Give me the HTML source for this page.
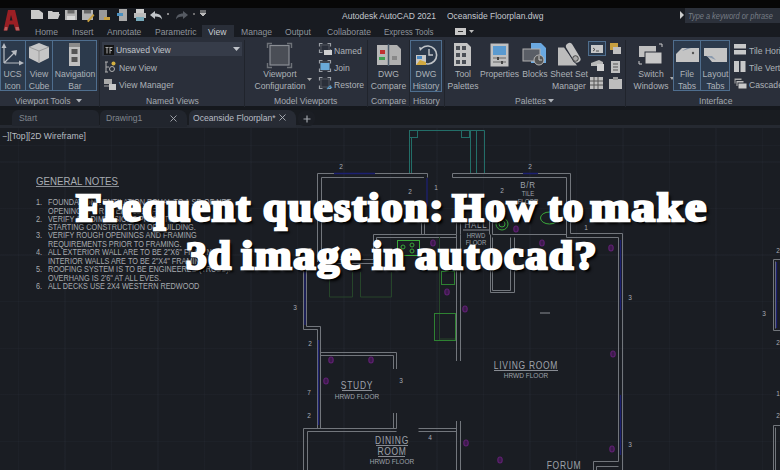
<!DOCTYPE html>
<html><head><meta charset="utf-8">
<style>
*{margin:0;padding:0;box-sizing:border-box}
html,body{width:780px;height:470px;overflow:hidden;background:#1a1d23}
body{position:relative;font-family:"Liberation Sans",sans-serif}
.a{position:absolute;white-space:nowrap}
svg.a{overflow:visible}
#top{left:0;top:0;width:780px;height:8px;background:#070707}
#tbar{left:0;top:8px;width:780px;height:29px;background:#181b21}
#ribbon{left:0;top:37px;width:780px;height:69px;background:#2a2f3a}
#lbl{left:0;top:106px;width:780px;height:4px;background:#15181d}
#ftabs{left:0;top:110px;width:780px;height:17px;background:#191c21}
#draw{left:0;top:127px;width:780px;height:343px;background:#1a1d23}
.tab{top:27px;font-size:8.6px;color:#8e949c;line-height:11px}
.rt{font-size:8.6px;color:#adb2b8;line-height:11px}
.ct{text-align:center}
.pl{top:96px;font-size:8.6px;color:#a4a9b0;line-height:11px}
.notes{font-size:7.3px;line-height:7.55px;color:#a8abb0;transform:scaleY(1.12);transform-origin:0 0}
.sep{top:40px;width:1px;height:67px;background:#20242c}
.title{color:#fff;font-family:"Liberation Serif",serif;font-weight:bold;font-size:44.0px;letter-spacing:1.5px;line-height:normal;-webkit-text-stroke:2.8px #fff;text-shadow:2px 2px 1px #000,3px 3px 3px #000;transform-origin:0 0}
</style></head><body>
<div class="a" id="top"></div>
<div class="a" id="tbar"></div>
<div class="a" id="ribbon"></div>
<div class="a" id="lbl"></div>
<div class="a" id="ftabs"></div>
<div class="a" id="draw"></div>
<div class="a" style="left:0;top:125px;width:780px;height:3px;background:#252931"></div>

<!-- logo -->
<svg class="a" style="left:0;top:0" width="24" height="34"><path d="M3.5 30.5L8 10L15 10L19.8 30.5L15.5 30.5L13.8 24.5L9.2 24.5L7.5 30.5Z M9.8 20.5L11 15L12.5 20.5Z" fill="#9a1f24" fill-rule="evenodd"/><path d="M4 30.5L5 27L7.5 27L7.2 30.5Z M16 30.5L15.3 27L18.8 27L19.5 30.5Z" fill="#c87a78" opacity="0.7"/></svg>
<!-- QAT -->
<svg class="a" style="left:0;top:0" width="220" height="24">
 <g fill="#c9c9c9">
  <path d="M31 10h8l4 3v6h-12z"/>
  <path d="M48 11h4l1 1h6v2h-9l-2 5z M50 14h10l-2 5h-10z"/>
  <path d="M65 10h12v10h-12z" fill="#b4b4b4"/><rect x="67.5" y="10" width="7" height="3.5" fill="#6a6a6a"/><rect x="67" y="16" width="8" height="4" fill="#d8d8d8"/>
  <path d="M82 10h11v10h-11z" fill="#b4b4b4"/><rect x="84" y="10" width="7" height="3.5" fill="#6a6a6a"/><path d="M87 21l6-7 1.5 1.2-6 7z" fill="#c8a040"/>
  <path d="M99 10h8v10h-8z" fill="#999"/><path d="M104 17h6v3h-6z" fill="#c8a040"/>
  <path d="M119 9h8v12h-8z" fill="#aaa"/><rect x="117" y="13" width="6" height="3" fill="#4a90c0"/>
  <path d="M134 13h12v5h-12z" fill="#bbb"/><rect x="136" y="9" width="8" height="4" fill="#ccc"/><rect x="136" y="17" width="8" height="4" fill="#7ab"/>
  <path d="M150 15l5-4v2.5c4 0 7 2 7 6c-1-2-3-3-7-3v2.5z" fill="#c0c4c8"/>
  <circle cx="168" cy="14" r="1" fill="#aaa"/>
  <path d="M188 15l-5-4v2.5c-4 0-7 2-7 6c1-2 3-3 7-3v2.5z" fill="#555a62"/>
  <circle cx="194" cy="14" r="1" fill="#888"/>
  <path d="M200 11h6M200 13h6l-3 3z" stroke="#bbb" fill="#bbb" stroke-width="1"/>
 </g>
</svg>
<div class="a" style="left:342px;top:10px;font-size:8.5px;color:#c4c8ce;line-height:12px">Autodesk AutoCAD 2021</div>
<div class="a" style="left:447px;top:10px;font-size:8.5px;color:#c4c8ce;line-height:12px">Oceanside Floorplan.dwg</div>
<svg class="a" style="left:679px;top:11px" width="6" height="8"><path d="M1 0l4 4-4 4z" fill="#ccc"/></svg>
<div class="a" style="left:685px;top:8px;width:95px;height:15px;background:#2c313b"></div>
<div class="a" style="left:688px;top:9.5px;font-size:8.6px;color:#767c85;font-style:italic;line-height:12px;transform:scaleX(0.86);transform-origin:0 0">Type a keyword or phrase</div>

<!-- tabs -->
<div class="a" style="left:202px;top:25px;width:32px;height:13px;background:#292e38"></div>
<div class="a tab" style="left:35px">Home</div>
<div class="a tab" style="left:72px">Insert</div>
<div class="a tab" style="left:107px">Annotate</div>
<div class="a tab" style="left:155px">Parametric</div>
<div class="a tab" style="left:208px;color:#c8ccd2">View</div>
<div class="a tab" style="left:241px">Manage</div>
<div class="a tab" style="left:285px">Output</div>
<div class="a tab" style="left:327px">Collaborate</div>
<div class="a tab" style="left:384px;transform:scaleX(0.93);transform-origin:0 0">Express Tools</div>
<div class="a" style="left:455px;top:28px;width:11px;height:7px;background:#c8c8c8"></div>
<div class="a" style="left:458px;top:31px;width:5px;height:1px;background:#333"></div>
<svg class="a" style="left:469px;top:30px" width="5" height="4"><path d="M0 0h5l-2.5 3z" fill="#bbb"/></svg>


<!-- ===== RIBBON ===== -->
<!-- Viewport tools -->
<div class="a" style="left:0;top:40px;width:97px;height:51px;background:#2c3a4c;border:1px solid #4f6e8e"></div>
<div class="a" style="left:25px;top:40px;width:1px;height:51px;background:#4f6e8e"></div>
<div class="a" style="left:52px;top:40px;width:1px;height:51px;background:#4f6e8e"></div>
<svg class="a" style="left:0;top:40px" width="97" height="30">
 <g stroke="#b8bcc2" stroke-width="1.2" fill="none"><path d="M4 23V6M4 23H21M4 23L15 12"/></g>
 <g fill="#b8bcc2"><path d="M1.5 8L4 3 6.5 8z"/><path d="M19 20.5L24 23 19 25.5z"/><path d="M11 11L17 10 16 16z"/></g>
 <path d="M39 3l10 4v11l-10 5-10-5V7z" fill="#c6c6c6"/><path d="M29 7l10 4 10-4" stroke="#9a9a9a" fill="none"/><path d="M39 11v12" stroke="#9a9a9a"/>
 <rect x="69" y="3" width="11" height="23" fill="#c0c0c0"/><rect x="69" y="3" width="11" height="4" fill="#8a8a8a"/><rect x="71.5" y="9" width="6" height="5" fill="#555"/><rect x="71.5" y="17" width="6" height="5" fill="#555"/>
</svg>
<div class="a rt ct" style="left:0;top:69px;width:25px">UCS</div>
<div class="a rt ct" style="left:0;top:81px;width:25px">Icon</div>
<div class="a rt ct" style="left:26px;top:69px;width:26px">View</div>
<div class="a rt ct" style="left:26px;top:81px;width:26px">Cube</div>
<div class="a rt ct" style="left:53px;top:69px;width:44px">Navigation</div>
<div class="a rt ct" style="left:53px;top:81px;width:44px">Bar</div>
<div class="a pl" style="left:15px">Viewport Tools</div>
<svg class="a" style="left:76px;top:99px" width="6" height="4"><path d="M0 0h6l-3 3.5z" fill="#b0b4ba"/></svg>
<div class="a sep" style="left:99px"></div>

<!-- Named views -->
<div class="a" style="left:102px;top:42px;width:140px;height:14px;background:#363c49"></div>
<svg class="a" style="left:104px;top:45px" width="10" height="10"><rect width="10" height="10" fill="#141414"/><path d="M1.5 2.5h3M3 2.5v6M5.5 2.5h3M6 2.5v6M6 5.5h2" stroke="#a8a8a8" stroke-width="1"/></svg>
<div class="a rt" style="left:116px;top:45px;color:#c0c4ca">Unsaved View</div>
<svg class="a" style="left:233px;top:47px" width="7" height="4"><path d="M0 0h7l-3.5 4z" fill="#c0c4ca"/></svg>
<svg class="a" style="left:104px;top:61px" width="12" height="12"><path d="M1 1h3M2 1v10M1 11h3M2 6h3" stroke="#b0b0b0" fill="none"/><circle cx="8" cy="8" r="2.5" stroke="#b0b0b0" fill="none"/><circle cx="9.5" cy="2.5" r="2" fill="#d4b040"/></svg>
<div class="a rt" style="left:119px;top:63px">New View</div>
<svg class="a" style="left:104px;top:78px" width="12" height="12"><rect x="0" y="1" width="8" height="5" fill="#aaa"/><rect x="5" y="6" width="7" height="6" fill="#c8c8c8"/><path d="M0 8h5" stroke="#aaa"/></svg>
<div class="a rt" style="left:119px;top:80px">View Manager</div>
<div class="a pl" style="left:146px">Named Views</div>
<div class="a sep" style="left:244px"></div>

<!-- Model Viewports -->
<svg class="a" style="left:267px;top:43px" width="25" height="25"><rect x="3" y="2.5" width="19" height="19.5" fill="#4a4e56" stroke="#8a8e94" stroke-width="1.2"/><path d="M0.5 5V0.5H5M20 0.5H24.5V5M24.5 20V24.5H20M5 24.5H0.5V20" stroke="#6e7278" stroke-width="1.4" fill="none"/></svg>
<div class="a rt ct" style="left:250px;top:69px;width:60px">Viewport</div>
<div class="a rt ct" style="left:250px;top:81px;width:60px">Configuration</div>
<svg class="a" style="left:307px;top:78px" width="5" height="3"><path d="M0 0h5l-2.5 3z" fill="#aaa"/></svg>
<svg class="a" style="left:318px;top:42px" width="16" height="50"><path d="M1.5 4.5V1.5H4.5M9.5 1.5H12.5V4.5M12.5 7.5V10.5H9.5M4.5 10.5H1.5V7.5" stroke="#9a9ea4" stroke-width="1.2" fill="none"/><rect x="3.0" y="3.0" width="8.0" height="6.0" fill="none" stroke="#5a5e66" stroke-width="0.8"/><rect x="6" y="8" width="8" height="5" fill="#d0d0d0"/><path d="M1.5 21.5V18.5H4.5M9.5 18.5H12.5V21.5M12.5 26.5V29.5H9.5M4.5 29.5H1.5V26.5" stroke="#9a9ea4" stroke-width="1.2" fill="none"/><rect x="3.0" y="20.0" width="8.0" height="8.0" fill="none" stroke="#5a5e66" stroke-width="0.8"/><rect x="2.5" y="21" width="9" height="7" fill="#6aaad8"/><path d="M1.5 38.5V35.5H4.5M9.5 35.5H12.5V38.5M12.5 43.5V46.5H9.5M4.5 46.5H1.5V43.5" stroke="#9a9ea4" stroke-width="1.2" fill="none"/><rect x="3.0" y="37.0" width="8.0" height="8.0" fill="none" stroke="#5a5e66" stroke-width="0.8"/><path d="M9 47l3-3 2 2" stroke="#4a90c0" stroke-width="1.2" fill="none"/></svg>
<div class="a rt" style="left:334px;top:46px">Named</div>
<div class="a rt" style="left:334px;top:63px">Join</div>
<div class="a rt" style="left:334px;top:80px">Restore</div>
<div class="a pl" style="left:274px">Model Viewports</div>
<div class="a sep" style="left:367px"></div>

<!-- Compare -->
<svg class="a" style="left:376px;top:44px" width="26" height="22">
 <rect x="1" y="1" width="11" height="20" fill="#b8b8b8"/><rect x="4" y="6" width="5" height="4" fill="#c03030"/><rect x="3" y="13" width="6" height="3" fill="#40a050"/>
 <path d="M13 1h8l4 4v16h-12z" fill="#b0b0b0"/><rect x="16" y="12" width="5" height="4" fill="#888"/>
 <path d="M12.5 0v22" stroke="#4a5a6a" stroke-width="1.5"/>
</svg>
<div class="a rt ct" style="left:368px;top:69px;width:41px">DWG</div>
<div class="a rt ct" style="left:368px;top:81px;width:41px">Compare</div>
<div class="a pl" style="left:371px">Compare</div>
<div class="a sep" style="left:409px"></div>
<!-- History -->
<div class="a" style="left:410px;top:40px;width:32px;height:52px;background:#2c3a4c;border:1px solid #4f6e8e"></div>
<svg class="a" style="left:414px;top:43px" width="26" height="24">
 <path d="M8 5A9 9 0 1 1 8 19" stroke="#c0c4c8" stroke-width="1.6" fill="none"/><path d="M15 6v6h4" stroke="#c0c4c8" stroke-width="1.4" fill="none"/>
 <path d="M5 4l4 1-3 3z" fill="#c0c4c8"/>
 <rect x="2" y="12" width="10" height="10" fill="#c8c8c8"/><path d="M2 22l4-5 6 2v3z" fill="#d0a840"/><rect x="3" y="13" width="5" height="3" fill="#4a88c0"/>
</svg>
<div class="a rt ct" style="left:410px;top:69px;width:32px">DWG</div>
<div class="a rt ct" style="left:410px;top:81px;width:32px">History</div>
<div class="a pl" style="left:413px">History</div>
<div class="a sep" style="left:444px"></div>
<!-- Palettes -->
<svg class="a" style="left:453px;top:42px" width="19" height="25">
 <path d="M1 1h13l4 4v19h-17z" fill="#c4c4c4"/>
 <g fill="#4a4e55"><rect x="3" y="4" width="4" height="4"/><rect x="9" y="4" width="4" height="4"/><rect x="3" y="11" width="4" height="4"/><rect x="9" y="11" width="4" height="4"/><rect x="3" y="18" width="4" height="4"/><rect x="9" y="18" width="4" height="4"/></g>
</svg>
<div class="a rt ct" style="left:445px;top:69px;width:36px">Tool</div>
<div class="a rt ct" style="left:445px;top:81px;width:36px">Palettes</div>
<svg class="a" style="left:490px;top:43px" width="20" height="24">
 <rect x="0.5" y="0.5" width="18" height="23" fill="#c0c0c0"/><rect x="3" y="3" width="13" height="9" fill="#5a9ad0"/>
 <path d="M3 15h13M3 19h13" stroke="#666"/><rect x="7" y="14" width="2" height="3" fill="#444"/><rect x="11" y="18" width="2" height="3" fill="#444"/>
</svg>
<div class="a rt ct" style="left:478px;top:69px;width:43px">Properties</div>
<svg class="a" style="left:522px;top:42px" width="26" height="24">
 <path d="M9 1h10l5 5v15h-15z" fill="#6aa8e0"/>
 <rect x="1" y="7" width="17" height="12" fill="#5a5e66" stroke="#b0b0b0"/>
 <circle cx="17" cy="18" r="5" fill="#555" stroke="#b8b8b8"/><path d="M17 14v4h3" stroke="#ccc" fill="none"/>
</svg>
<div class="a rt ct" style="left:521px;top:69px;width:28px">Blocks</div>
<svg class="a" style="left:550px;top:38px" width="36" height="32">
 <path d="M8 9.5H14L27 27.5H8Z" fill="#bcbcbc"/>
 <path d="M19.5 8.5L27 21" stroke="#2a2f3a" stroke-width="9" stroke-linecap="round"/>
 <path d="M19.5 8.5L27 21" stroke="#c2c2c2" stroke-width="7" stroke-linecap="round"/>
 <circle cx="25.5" cy="20.5" r="2.8" fill="#aaa" stroke="#3a3a3a" stroke-width="0.9"/>
</svg>
<div class="a rt ct" style="left:549px;top:69px;width:40px">Sheet Set</div>
<div class="a rt ct" style="left:549px;top:81px;width:40px">Manager</div>
<div class="a" style="left:588px;top:41px;width:18px;height:15px;border:1px solid #4f6e8e;background:#2c3a4c"></div>
<svg class="a" style="left:588px;top:41px" width="36" height="50">
 <rect x="3" y="4" width="12" height="8" fill="#c8c8c8"/><path d="M5 7l2 1.5-2 1.5M8 10h3" stroke="#333" fill="none" stroke-width="0.8"/>
 <rect x="22" y="2" width="8" height="7" fill="#c8a040"/><rect x="25" y="6" width="8" height="7" fill="#c0c0c0"/>
 <path d="M3 22l8-3 4 2v4h-12z" fill="#b8b8b8"/><rect x="9" y="23" width="7" height="7" fill="#d0d0d0"/>
 <rect x="23" y="20" width="9" height="12" fill="#c0c0c0"/><path d="M25 23h5M25 26h5M25 29h5" stroke="#555"/>
 <rect x="2" y="36" width="13" height="12" fill="#bdbdbd"/><path d="M6 36v12M10 36v12M2 40h13M2 44h13" stroke="#555"/>
 <rect x="21" y="38" width="13" height="10" fill="#bdbdbd"/><rect x="25" y="36" width="5" height="3" fill="#999"/>
</svg>
<div class="a pl" style="left:515px">Palettes</div>
<svg class="a" style="left:548px;top:99px" width="6" height="4"><path d="M0 0h6l-3 3.5z" fill="#b0b4ba"/></svg>
<div class="a sep" style="left:625px"></div>
<!-- Interface -->
<svg class="a" style="left:638px;top:43px" width="26" height="23">
 <rect x="1" y="3" width="17" height="11" fill="#c0c0c0"/><rect x="7" y="9" width="17" height="12" fill="#c8c8c8" stroke="#2a2f38"/>
 <path d="M21 1h3v3M1 18v3h3" stroke="#ccc" fill="none"/>
</svg>
<div class="a rt ct" style="left:630px;top:69px;width:42px">Switch</div>
<div class="a rt ct" style="left:630px;top:81px;width:42px">Windows</div>
<svg class="a" style="left:670px;top:77px" width="4" height="3"><path d="M0 0h4l-2 3z" fill="#aaa"/></svg>
<div class="a" style="left:673px;top:40px;width:57px;height:51px;background:#2c3a4c;border:1px solid #4f6e8e"></div>
<div class="a" style="left:700px;top:40px;width:1px;height:51px;background:#4f6e8e"></div>
<svg class="a" style="left:675px;top:46px" width="54" height="17">
 <path d="M1 8l6-6h17v14h-23z" fill="#c4c4c4"/><path d="M7 5l5-3h4z" fill="#7a8aa0"/><circle cx="18" cy="7" r="1.2" fill="#555"/>
 <path d="M29 2h23v14h-15l-5-6h-3z" fill="#c4c4c4"/><path d="M31 10h6l4 4z" fill="#8a9aae"/>
</svg>
<div class="a rt ct" style="left:674px;top:69px;width:26px">File</div>
<div class="a rt ct" style="left:674px;top:81px;width:26px">Tabs</div>
<div class="a rt ct" style="left:701px;top:69px;width:29px">Layout</div>
<div class="a rt ct" style="left:701px;top:81px;width:29px">Tabs</div>
<svg class="a" style="left:733px;top:43px" width="14" height="48">
 <rect x="1" y="1" width="12" height="4.5" fill="#c8c8c8"/><rect x="1" y="7" width="12" height="4.5" fill="#c8c8c8"/>
 <rect x="1" y="18" width="5" height="11" fill="#c8c8c8"/><rect x="7.5" y="18" width="5" height="11" fill="#c8c8c8"/>
 <rect x="1" y="35" width="8" height="6" fill="#aaa" stroke="#2a2f38"/><rect x="3" y="37.5" width="8" height="6" fill="#bbb" stroke="#2a2f38"/><rect x="5" y="40" width="9" height="6" fill="#c8c8c8" stroke="#2a2f38"/>
</svg>
<div class="a rt" style="left:749px;top:46px">Tile Horizontally</div>
<div class="a rt" style="left:749px;top:63px">Tile Vertically</div>
<div class="a rt" style="left:749px;top:80px">Cascade</div>
<div class="a pl" style="left:699px">Interface</div>

<!-- ===== FILE TABS ===== -->
<div class="a" style="left:12px;top:110px;width:87px;height:16px;background:#21252d;border-radius:6px 6px 0 0"></div>
<div class="a" style="left:100px;top:110px;width:87px;height:17px;background:#21252d;border-radius:6px 8px 0 0"></div>
<div class="a rt" style="left:19px;top:113px;color:#80868e">Start</div>
<div class="a rt" style="left:106px;top:113px;color:#80868e">Drawing1</div>
<svg class="a" style="left:170px;top:115px" width="7" height="7"><path d="M0.5 0.5l6 6M6.5 0.5l-6 6" stroke="#a8acb2" stroke-width="0.9"/></svg>
<div class="a" style="left:189px;top:110px;width:107px;height:17px;background:#272b34;border-radius:6px 8px 0 0"></div>
<div class="a rt" style="left:193px;top:113px;color:#b8bcc4">Oceanside Floorplan*</div>
<svg class="a" style="left:279px;top:114px" width="7" height="7"><path d="M0.5 0.5l6 6M6.5 0.5l-6 6" stroke="#b0b4bc" stroke-width="0.9"/></svg>
<div class="a" style="left:298px;top:111px;width:17px;height:15px;background:#1b1e24;border-radius:6px"></div>
<svg class="a" style="left:303px;top:115px" width="8" height="8"><path d="M4 0.5v7M0.5 4h7" stroke="#a0a4aa" stroke-width="1.2"/></svg>
<div class="a" style="left:2px;top:131px;font-size:8.6px;color:#b8bcc2;line-height:11px">&#x2212;][Top][2D Wireframe]</div>

<!-- ===== DRAWING ===== -->
<div class="a" style="left:0;top:128px;width:780px;height:342px;background-image:repeating-linear-gradient(90deg,rgba(110,120,150,0.04) 0 1px,transparent 1px 46.5px),repeating-linear-gradient(0deg,rgba(110,120,150,0.04) 0 1px,transparent 1px 46.5px);background-position:18px 0,0 18px"></div>
<svg class="a" style="left:0;top:0" width="780" height="470" viewBox="0 0 780 470">
 <g fill="none" stroke-width="1">
  <!-- teal entry -->
  <g stroke="#236e68">
   <path d="M409.5 173V130.5H484.5V173M411.5 173V137.5"/>
   <path d="M470.5 131V173M476.5 131V173"/>
   <rect x="409.5" y="130.5" width="8" height="7"/><rect x="461.5" y="130.5" width="8" height="7"/>
  </g>
  <!-- walls -->
  <g stroke="#72767c">
   <path d="M317.5 262V173.5H427.5M321.5 262V177.5H424"/>
   <path d="M452.5 173.5H570.5V233.5H622.5V470M452.5 177.5H566.5V237.5H618.5V461.5H593.5V470M596.5 470V466.5H618.5"/>
   <path d="M373.5 234.5H456.5M376.5 237.5H456.5"/>
   <path d="M456.5 234.5V361M460.5 234.5V361M456.5 421V470M460.5 421V470"/>
   <path d="M492.5 234.5H566.5M492.5 237.5V290.5H510.5V237.5M490.5 234.5V292.5H514.5V237.5"/>
   <path d="M373.5 234.5V259.5H321.5M376.5 237.5V263.5H321.5"/>
   <path d="M303.5 270V329.5H317.5V352M306.5 270V326.5H320.5V355"/>
   <path d="M317.5 352V428M320.5 355V428"/>
   <path d="M320.5 352.5H396.5V369M320.5 355.5H393.5V369M396.5 413V428.5M393.5 413V428.5"/>
   <path d="M303.5 428.5H396.5M307.5 431.5H396.5M418.5 428.5H456.5M418.5 431.5H456.5"/>
   <path d="M303.5 428.5V470M307.5 431.5V470"/>
   <path d="M427.5 173.5V177.5M452.5 173.5V177.5M421.5 221V234.5M424.5 221V234.5M492.5 215V234.5M489.5 215V234.5M456.5 215V234.5M460.5 215V234.5"/>
   <path d="M773.5 259.5H780M773.5 259.5V330.5H780M775.5 261.5V328.5"/>
   <path d="M773.5 425.5H780M773.5 425.5V470M775.5 427.5V470"/>
   
  </g>
  <!-- blue dims -->
  <g stroke="#1c2070" stroke-width="1.3">
   <path d="M427 178V215M334 173.5H375M523 173.5H538M305 272V325M318.5 340V425M620.5 240V310M620.5 395V455M776.5 262V328"/>
  </g>
  <!-- green -->
  <g stroke="#26452a">
   <path d="M439.5 237V340M329.5 272V297H352.5V272M360.5 272V297H391.5V272M455 339H440"/>
  </g>
  <g stroke="#3aa83a">
   <rect x="397.5" y="240.5" width="22" height="15"/></g><g stroke="#2e8232"><rect x="441.5" y="271.5" width="13" height="13"/><rect x="434.5" y="313.5" width="21" height="27"/></g><g stroke="#3aa83a">
   <circle cx="403" cy="247" r="2"/><circle cx="412" cy="245" r="2"/><circle cx="412" cy="251" r="2"/>
   <circle cx="502" cy="224" r="6"/><circle cx="502" cy="224" r="3"/><ellipse cx="549.5" cy="218" rx="9" ry="6"/>
  </g>
  <!-- magenta -->
  <g stroke="#5e2070" stroke-width="1.2" fill="#3c1a4c">
   <ellipse cx="516" cy="229" rx="2.2" ry="3"/><ellipse cx="542" cy="243" rx="2.2" ry="3"/><ellipse cx="611" cy="248" rx="2.2" ry="3"/><ellipse cx="433" cy="243" rx="2.2" ry="3"/>
   <ellipse cx="447" cy="292" rx="2.2" ry="3"/><ellipse cx="465" cy="309" rx="2.2" ry="3"/><ellipse cx="613" cy="354" rx="2.2" ry="3"/><ellipse cx="466" cy="443" rx="2.2" ry="3"/>
   <ellipse cx="612" cy="449" rx="2.2" ry="3"/><ellipse cx="500" cy="460" rx="2.2" ry="3"/><ellipse cx="331" cy="360" rx="2.2" ry="3"/><ellipse cx="371" cy="360" rx="2.2" ry="3"/><ellipse cx="326" cy="381" rx="2.2" ry="3"/>
  </g>
  
  <path d="M540 313H550" stroke="#8a8e94"/>
 </g>
 <g fill="#a8acb4" font-family="Liberation Sans" font-size="6.5" text-anchor="middle">
  <text x="341" y="169">2</text><text x="410" y="194">2</text><text x="436" y="190">1</text><text x="502" y="193">2</text>
  <text x="530" y="169">2</text><text x="586" y="230">1</text><text x="630" y="300">3</text><text x="630" y="447">3</text>
  <text x="295" y="310">3</text><text x="310" y="346">2</text><text x="309" y="395">7</text><text x="309" y="418">2</text>
  <text x="401" y="383">3</text><text x="430" y="440">4</text><text x="310" y="253">2</text>
  <text x="778" y="253">2</text><text x="764" y="316">3</text><text x="778" y="345">2</text><text x="778" y="396">1</text><text x="778" y="418">2</text>
 </g>
 <g fill="#9ea2aa" font-family="Liberation Sans" text-anchor="middle">
  <text transform="translate(528 188) scale(1 1.19)" font-size="8" letter-spacing="0.7">B/R</text><text transform="translate(528 196) scale(1 1.15)" font-size="6">TILE</text><text transform="translate(528 204) scale(1 1.15)" font-size="6">FLOOR</text>
  <text transform="translate(476 228) scale(1 1.19)" font-size="8" letter-spacing="0.7">HALL</text><text transform="translate(476 237.5) scale(1 1.15)" font-size="6">HRWD</text><text transform="translate(476 245) scale(1 1.15)" font-size="6">FLOOR</text>
  <text transform="translate(526 369) scale(1 1.19)" font-size="8.5" letter-spacing="0.7">LIVING ROOM</text><text transform="translate(526 378) scale(1 1.15)" font-size="6.5">HRWD FLOOR</text>
  <text transform="translate(357 389) scale(1 1.19)" font-size="8.5" letter-spacing="0.7">STUDY</text><text transform="translate(357 399) scale(1 1.15)" font-size="6.5">HRWD FLOOR</text>
  <text transform="translate(392 444) scale(1 1.19)" font-size="8.5" letter-spacing="0.7">DINING</text><text transform="translate(392 455) scale(1 1.19)" font-size="8.5" letter-spacing="0.7">ROOM</text><text transform="translate(392 464) scale(1 1.15)" font-size="6.5">HRWD FLOOR</text>
  <text transform="translate(564 469) scale(1 1.19)" font-size="8.5" letter-spacing="0.7">FORUM</text>
 </g>
 <g stroke="#a4a8b0" stroke-width="0.8"><path d="M494 370.5H558M342 390.5H372M376 445.5H408M378 456.5H405M463 230H489"/></g>
</svg>
<!-- notes -->
<div class="a" style="left:36px;top:175px;font-size:9.7px;color:#a8acb2;line-height:11px;transform:scaleY(1.1);transform-origin:0 0">GENERAL NOTES</div>
<div class="a" style="left:36px;top:186px;width:83px;height:1px;background:#8a8e94"></div>
<div class="a notes" style="left:36px;top:197.5px">1.<br>&nbsp;<br>2.<br>&nbsp;<br>3.<br>&nbsp;<br>4.<br>&nbsp;<br>5.<br>&nbsp;<br>6.</div>
<div class="a notes" style="left:48px;top:197.5px">FOUNDATION VENTILATION EQUAL TO 1 SF. OF NET<br>OPENINGS FOR EVERY 150 SF.<br>VERIFY ALL DIMENSIONS PRIOR TO<br>STARTING CONSTRUCTION OF BUILDING.<br>VERIFY ROUGH OPENINGS AND FRAMING<br>REQUIREMENTS PRIOR TO FRAMING.<br>ALL EXTERIOR WALL ARE TO BE 2"X6" FRAMING<br>INTERIOR WALLS ARE TO BE 2"X4" FRAMING<br>ROOFING SYSTEM IS TO BE ENGINEERED (TRUSS).<br>OVERHANG IS 2'6" AT ALL EVES.<br>ALL DECKS USE 2X4 WESTERN REDWOOD</div>

<div class="a title" style="left:76.0px;top:185.4px;transform:scale(0.951,0.9)">Frequent</div>
<div class="a title" style="left:263.0px;top:185.4px;transform:scale(0.973,0.9)">question:</div>
<div class="a title" style="left:451.9px;top:185.4px;transform:scale(0.925,0.9)">How</div>
<div class="a title" style="left:547.9px;top:185.4px;transform:scale(0.923,0.9)">to</div>
<div class="a title" style="left:590.0px;top:185.4px;transform:scale(1.084,0.9)">make</div>
<div class="a title" style="left:186.0px;top:233.1px;transform:scale(0.939,0.9)">3d</div>
<div class="a title" style="left:241.0px;top:233.1px;transform:scale(1.008,0.9)">image</div>
<div class="a title" style="left:372.0px;top:233.1px;transform:scale(0.846,0.9)">in</div>
<div class="a title" style="left:415.0px;top:233.1px;transform:scale(1.000,0.9)">autocad?</div>
</body></html>
